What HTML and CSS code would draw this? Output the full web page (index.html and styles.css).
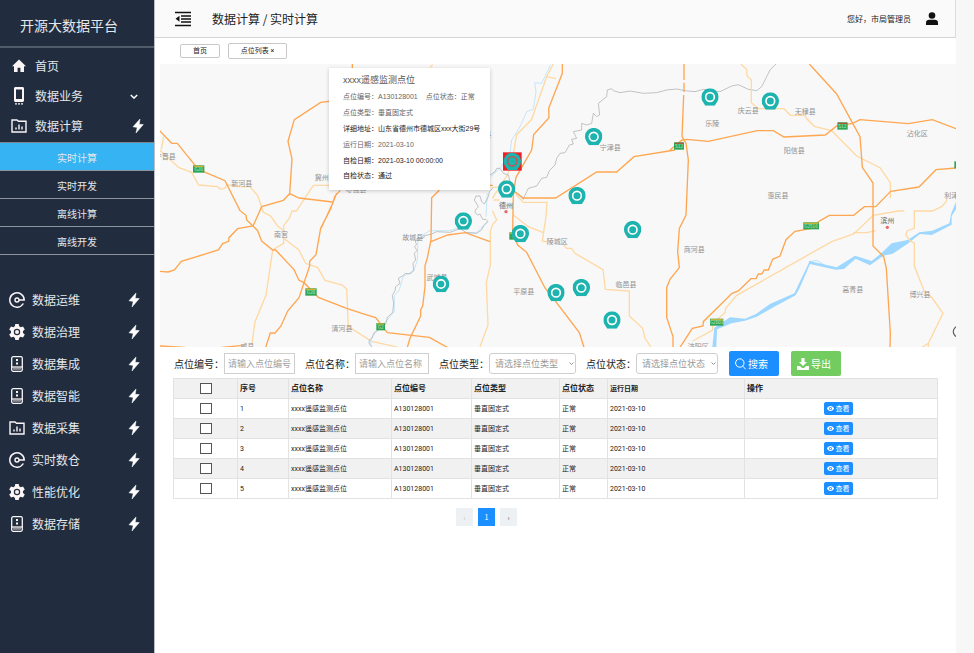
FILE: index.html
```html
<!DOCTYPE html>
<html lang="zh-CN">
<head>
<meta charset="utf-8">
<title>开源大数据平台</title>
<link rel="stylesheet" href="styles.css">
</head>
<body>
<svg class="defs" width="0" height="0" aria-hidden="true">
  <symbol id="i-bolt" viewBox="0 0 12 14"><path d="M8 0 1 7.800 5.200 8.400 4 14 11.300 5.600 7.200 5.200z" fill="currentColor" stroke="currentColor" stroke-width=".5"/></symbol>
  <symbol id="i-home" viewBox="0 0 14 14"><path d="M7 .5 0 7.200h2V13h3.600V8.800h2.800V13H12V7.200h2z" fill="currentColor"/></symbol>
  <symbol id="i-phone" viewBox="0 0 10 18"><path d="M1.500 0h7C9.400 0 10 .6 10 1.500v12c0 .9-.6 1.500-1.500 1.500h-7C.6 15 0 14.400 0 13.500v-12C0 .6.6 0 1.500 0zM2 2.500v9.500h6V2.500z" fill="currentColor" fill-rule="evenodd"/><path d="M1 16.200h2v1.300H1zM4 16.200h2v1.300H4zM7 16.200h2v1.300H7z" fill="currentColor"/></symbol>
  <symbol id="i-chart" viewBox="0 0 16 14"><path d="M1 1h5l1.500 1.200H15V13H1z" fill="none" stroke="currentColor" stroke-width="1.400"/><path d="M5 8.500v2M8 5.500v5M11 7.500v3" stroke="currentColor" stroke-width="1.400"/></symbol>
  <symbol id="i-ring" viewBox="0 0 16 16"><path d="M14.300 11.500A7.200 7.200 0 1 1 15.200 8H10" fill="none" stroke="currentColor" stroke-width="1.500"/><circle cx="8" cy="8" r="2" fill="none" stroke="currentColor" stroke-width="1.400"/></symbol>
  <symbol id="i-gear" viewBox="0 0 16 16"><path d="M6.300 0h3.400l.5 2.300 1.500.9 2.300-.8 1.800 3-1.800 1.700v1.800l1.800 1.700-1.800 3-2.300-.8-1.500.9-.5 2.300H6.300l-.5-2.300-1.500-.9-2.300.8-1.800-3L2 8.900V7.100L.2 5.400l1.800-3 2.300.8 1.500-.9z" fill="currentColor"/><circle cx="8" cy="8" r="2.600" fill="none" stroke="#212d3f" stroke-width="1.200"/></symbol>
  <symbol id="i-server" viewBox="0 0 12 16"><rect x=".7" y=".7" width="10.600" height="14.600" rx="1.500" fill="none" stroke="currentColor" stroke-width="1.300"/><path d="M1 11h10" stroke="currentColor" stroke-width="1.300"/><path d="M5 4h2M5 7.500h2" stroke="currentColor" stroke-width="2"/><path d="M3 13.800v-2M5 13.800v-2M7 13.800v-2M9 13.800v-2" stroke="currentColor"/></symbol>
  <symbol id="i-chev" viewBox="0 0 10 6"><path d="M1 1l4 4 4-4" fill="none" stroke="currentColor" stroke-width="1.800"/></symbol>
  <symbol id="i-eye" viewBox="0 0 14 10"><path d="M7 0C3.500 0 1 2.500 0 5c1 2.500 3.500 5 7 5s6-2.500 7-5C13 2.500 10.500 0 7 0zm0 1.800a3.200 3.200 0 1 1 0 6.400 3.200 3.200 0 0 1 0-6.400z" fill="currentColor" fill-rule="evenodd"/><circle cx="7" cy="5" r="1.700" fill="currentColor"/></symbol>
</svg>
<div class="app">
  <aside class="sidebar">
    <h1 class="brand">开源大数据平台</h1>
    <nav>
      <ul class="menu menu-top">
        <li><a href="#"><svg class="ico" width="14" height="14"><use href="#i-home"/></svg><span>首页</span></a></li>
        <li><a href="#"><svg class="ico" width="14" height="18"><use href="#i-phone"/></svg><span>数据业务</span><svg class="end chev" width="8" height="5"><use href="#i-chev"/></svg></a></li>
        <li><a href="#"><svg class="ico" width="16" height="14"><use href="#i-chart"/></svg><span>数据计算</span><svg class="end" width="12" height="14"><use href="#i-bolt"/></svg></a></li>
      </ul>
      <ul class="submenu">
        <li><a class="active" href="#">实时计算</a></li>
        <li><a href="#">实时开发</a></li>
        <li><a href="#">离线计算</a></li>
        <li><a href="#">离线开发</a></li>
      </ul>
      <ul class="menu menu-main">
        <li><a href="#"><svg class="ico" width="16" height="16"><use href="#i-ring"/></svg><span>数据运维</span><svg class="end" width="12" height="14"><use href="#i-bolt"/></svg></a></li>
        <li><a href="#"><svg class="ico" width="16" height="16"><use href="#i-gear"/></svg><span>数据治理</span><svg class="end" width="12" height="14"><use href="#i-bolt"/></svg></a></li>
        <li><a href="#"><svg class="ico" width="16" height="16"><use href="#i-server"/></svg><span>数据集成</span><svg class="end" width="12" height="14"><use href="#i-bolt"/></svg></a></li>
        <li><a href="#"><svg class="ico" width="16" height="16"><use href="#i-server"/></svg><span>数据智能</span><svg class="end" width="12" height="14"><use href="#i-bolt"/></svg></a></li>
        <li><a href="#"><svg class="ico" width="16" height="14"><use href="#i-chart"/></svg><span>数据采集</span><svg class="end" width="12" height="14"><use href="#i-bolt"/></svg></a></li>
        <li><a href="#"><svg class="ico" width="16" height="16"><use href="#i-ring"/></svg><span>实时数仓</span><svg class="end" width="12" height="14"><use href="#i-bolt"/></svg></a></li>
        <li><a href="#"><svg class="ico" width="16" height="16"><use href="#i-gear"/></svg><span>性能优化</span><svg class="end" width="12" height="14"><use href="#i-bolt"/></svg></a></li>
        <li><a href="#"><svg class="ico" width="16" height="16"><use href="#i-server"/></svg><span>数据存储</span><svg class="end" width="12" height="14"><use href="#i-bolt"/></svg></a></li>
      </ul>
    </nav>
  </aside>

  <main class="main">
    <header class="header">
      <button class="fold" type="button" aria-label="收起菜单"><svg width="16" height="16" viewBox="0 0 16 16"><path d="M0 1.500h16M6 5h10M6 8h10M6 11h10M0 14.500h16" stroke="#111" stroke-width="1.600"/><path d="M4.500 4.800v6L.5 7.800z" fill="#111"/></svg></button>
      <div class="crumb">数据计算 / 实时计算</div>
      <div class="user">您好，市局管理员</div>
      <svg class="avatar" width="12" height="14" viewBox="0 0 12 14"><circle cx="6" cy="3.500" r="3.300" fill="#111"/><path d="M0 13v-2.500C0 8.800 1.500 7.800 3 7.800h6c1.500 0 3 1 3 2.700V13z" fill="#111"/></svg>
    </header>

    <div class="tabs">
      <button class="tab tab-home" type="button">首页</button>
      <button class="tab tab-list" type="button">点位列表 ×</button>
    </div>

    <section class="map">
      <svg class="map-art" viewBox="0 0 2388 849">
        <symbol id="pin" viewBox="-26 -26 52 52"><path d="M-14 26-21 15A26 26 0 1 1 21 15L14 26z" fill="#1db3ae"/><circle r="13" fill="none" stroke="#fff" stroke-width="5"/></symbol>
        <g transform="translate(-15 -12)">
          <g class="minor">
            <path d="M26 230 19 268M14 270 72 323 110 337 131 375 188 380 195 387 207 386 217 375 255 380H285L308 407 325 457 347 468 367 497 386 512M386 535 431 569 452 610 488 623 510 661 562 675 575 687 580 800 650 844 730 862"/>
            <path d="M560 376H475L424 453H411L404 473 386 497V550L353 570 333 706 300 785 291 850"/>
          </g>
          <path class="stream" d="M789 530 787 600 776 634 745 648 733 690 718 706 718 755 695 782 660 820 646 842 650 862"/>
          <path class="border" d="M810 530 800 536 789 534 781 546 785 553 779 560 786 572 778 580 782 600 774 610 776 630 765 642 752 640 742 648 730 655 735 670 722 680 720 692 712 706 716 730 713 757 697 772 692 793 675 806 657 818 650 835 642 842 643 852 650 860"/>
          <g class="major">
            <path d="M14 212 50 250H67L118 313 130 328 210 362 255 452 273 466 275 480 294 498 308 512 320 543 353 570H362L417 629 432 661 447 668 490 712 575 745 630 763 662 773 697 818 823 832 877 862"/>
            <path d="M14 634 40 636 58 630 79 604 190 570 203 551 221 544 222 533 248 506 294 498 320 440 385 421 404 401 432 414 533 426"/>
            <path d="M530 123 497 127 418 179 399 244 411 297 404 401"/>
            <path d="M556 391 540 408 527 446 497 505 483 584 464 604V618L447 668 432 713 398 753 378 798 360 819H346L332 862M545 400 533 430 499 503"/>
            <path d="M14 858 90 862M200 862 258 857M592 12V24"/>
          </g>
          <g class="names">
            <text x="31" y="298">宁晋县</text><text x="260" y="379">新河县</text><text x="500" y="359">冀州</text><text x="603" y="395">枣强县</text><text x="378" y="531">南宫</text><text x="773" y="541">故城县</text><text x="561" y="812">清河县</text><text x="277" y="868">威县</text>
          </g>
          <g class="shields">
            <rect x="114" y="316" width="34" height="22"/><path d="M116 319h30"/><text x="131" y="333">G20</text>
            <rect x="451" y="685" width="34" height="22"/><path d="M453 688h30"/><text x="468" y="702">G20</text>
            <rect x="664" y="789" width="26" height="22"/><path d="M666 792h22"/><text x="677" y="806">G2</text>
          </g>
        </g>
        <g transform="translate(720 -12)">
          <g class="minor">
            <path d="M460 12 440 50 410 135 395 178 350 224 335 310 322 345 277 415M440 50 468 56M277 452 290 480 277 495 271 515V615L259 668 264 795 240 860"/>
            <path d="M340 395 370 427H441L438 470 427 543 442 546M340 465 385 500 430 518M492 555 500 565H515L525 580 609 629 616 688 688 693V768L728 805 735 835 752 860M280 420H298M98 14 90 22M275 382H300"/>
          </g>
          <path class="stream" d="M452 14 425 70 404 68 408 95 400 148 380 155 360 200 335 240 330 280 300 325 272 350M262 400 258 470M60 530 90 512H150L180 502M200 518H230L262 485"/>
          <path class="border" d="M55 542 70 528 95 522 110 515 150 517 180 506 200 518 230 520 245 510 250 498 264 485 258 478 248 478 240 462 233 465 225 458 226 450 235 440 223 420 228 408 240 408 245 425 253 432 265 410 268 395 278 385M270 345 285 335 290 325 300 325 310 340 325 345 330 365 328 385 345 395 370 418 380 395 385 385 410 378 425 355 440 352 448 332 465 315 470 295 480 280 495 278 508 255 520 252 515 238 530 235 520 215 545 210 545 190 560 195 575 190 580 160 590 170 599 165 595 130 620 110 622 90 635 86 640 92 660 98 690 93 730 100 770 98 800 90 830 87 855 92 885 95 910 88 960 95 995 78 1015 74 1045 88 1070 92 1085 80 1110 30 1128 12"/>
          <g class="major">
            <path d="M118 391 95 413 93 540 81 598 75 617V680L68 738 62 750V768L30 835 22 862M93 545 143 525 196 518 270 545"/>
            <path d="M487 12V40L446 145 447 173 401 224 395 270 348 352 340 400 338 515 353 555 380 577 435 684 465 722 538 818 552 862"/>
            <path d="M345 395 370 414H467L590 336H650L702 290 825 270M268 376H278"/>
          </g>
          <g class="names">
            <text x="264" y="231">县</text><text x="631" y="269">宁津县</text><text x="472" y="551">陵城区</text><text x="111" y="660">武城县</text><text x="371" y="701">平原县</text><text x="678" y="680">临邑县</text><text class="city" x="318" y="443">德州</text>
          </g>
          <circle cx="318" cy="455" r="5" fill="#e66"/>
          <g class="shields"><rect x="328" y="517" width="34" height="22"/><path d="M330 520h30"/><text x="345" y="534">G3</text></g>
          <rect x="309" y="277" width="56" height="55" fill="#ef1f25"/>
          <g class="pins">
            <circle cx="337" cy="304" r="26" fill="#1db3ae"/>
            <path d="M323 330h28l7-12h-42z" fill="#1db3ae"/>
            <circle cx="337" cy="304" r="14" fill="none" stroke="#d8484a" stroke-width="4"/>
            <use href="#pin" x="555" y="204" width="52" height="52"/>
            <use href="#pin" x="294" y="361" width="52" height="52"/>
            <use href="#pin" x="505" y="381" width="52" height="52"/>
            <use href="#pin" x="164" y="457" width="52" height="52"/>
            <use href="#pin" x="335" y="495" width="52" height="52"/>
            <use href="#pin" x="672" y="483" width="52" height="52"/>
            <use href="#pin" x="98" y="647" width="50" height="50"/>
            <use href="#pin" x="442" y="672" width="52" height="52"/>
            <use href="#pin" x="518" y="657" width="52" height="52"/>
            <use href="#pin" x="610" y="754" width="52" height="52"/>
          </g>
        </g>
        <g transform="translate(1530 -12)">
          <path fill="#9ed7ff" d="M858 425 843 462 838 490 787 512 748 517 713 540 665 550 637 577 605 603 555 587 500 622 418 603 415 612 388 668 373 700 300 732 258 762 225 776 180 772 133 803 127 862H139L141 808 185 790 225 782 260 770 310 742 377 706 390 682 420 612 497 629 522 627 557 596 600 616 640 587 668 581 715 550 750 522 785 525 845 494V468L858 448z"/>
          <path d="M418 605 440 601 462 614" fill="none" stroke="#9ed7ff" stroke-width="2"/>
          <g class="minor">
            <path d="M212 12 230 28 231 48 244 60V128L265 146H342L361 166H405L411 177 433 199 485 212 560 288 630 323 661 368V415"/>
            <path d="M703 453H685L610 466 551 522 485 545 200 706 167 745 165 758 128 790V810L68 843M550 518H590L617 512"/>
            <path d="M835 405 828 425 815 440 787 453H733V505L712 512 707 525 720 542 733 550V618L765 700 785 712 819 760 775 850 757 862M775 850V862"/>
          </g>
          <g class="major">
            <path d="M42 12V60M42 68V96M41 105 36 230 48 250 55 300 48 465 28 505 23 575 28 623 0 658-10 683V772L9 830V862"/>
            <path d="M0 270 36 240 50 238 115 244 262 212H310L342 231 466 225 500 198 548 190 570 179 715 191 787 179 858 206"/>
            <path d="M418 12 500 102 570 230 577 322 609 369V558L641 590 649 625 661 820 660 862"/>
            <path d="M858 324 798 329 747 381 662 394 617 440H583L551 466H478L447 484 425 505 375 514 348 539 330 588 308 598 295 630H283L275 642H265L258 656H243L205 693 186 700 100 785 99 798 67 805 30 862"/>
          </g>
          <g class="names">
            <text x="235" y="159">庆云县</text><text x="406" y="162">无棣县</text><text x="127" y="199">乐陵</text><text x="742" y="228">沾化区</text><text x="373" y="279">阳信县</text><text x="324" y="414">惠民县</text><text x="73" y="575">商河县</text><text class="city" x="652" y="490">滨州</text><text x="854" y="414">利津县</text><text x="548" y="697">高青县</text><text x="750" y="712">博兴县</text><text x="85" y="866">济阳区</text>
          </g>
          <circle cx="652" cy="502" r="5" fill="#e66"/>
          <g class="shields">
            <rect x="12" y="247" width="30" height="22"/><path class="prov" d="M14 250h26"/><text x="27" y="264">S12</text>
            <rect x="502" y="187" width="31" height="22"/><path class="prov" d="M504 190h27"/><text x="517" y="204">S12</text>
            <rect x="400" y="487" width="47" height="21"/><path d="M402 490h43"/><text x="423" y="504">G2516</text>
            <rect x="120" y="776" width="40" height="21"/><path d="M122 779h36"/><text x="140" y="793">G2001</text>
            <rect x="853" y="304" width="30" height="21"/>
          </g>
          <circle cx="866" cy="815" r="16" fill="#fff" stroke="#666" stroke-width="4"/>
          <use href="#pin" x="94" y="85" width="52" height="52"/>
          <use href="#pin" x="275" y="97" width="52" height="52"/>
        </g>
      </svg>
      <div class="popup">
        <h2>xxxx遥感监测点位</h2>
        <p><span>点位编号：A130128001</span><span>点位状态：正常</span></p>
        <p>点位类型：垂直固定式</p>
        <p class="strong">详细地址：山东省德州市德城区xxx大街29号</p>
        <p>运行日期：2021-03-10</p>
        <p class="strong">自检日期：2021-03-10 00:00:00</p>
        <p class="strong">自检状态：通过</p>
      </div>
    </section>

    <form class="filters">
      <div class="field"><label for="f-no">点位编号：</label><input class="w-no" id="f-no" type="text" placeholder="请输入点位编号"></div>
      <div class="field"><label for="f-name">点位名称：</label><input class="w-name" id="f-name" type="text" placeholder="请输入点位名称"></div>
      <div class="field"><label for="f-type">点位类型：</label><div class="pick w-type"><select id="f-type"><option>请选择点位类型</option></select><svg width="5" height="3"><use href="#i-chev"/></svg></div></div>
      <div class="field"><label for="f-state">点位状态：</label><div class="pick w-state"><select id="f-state"><option>请选择点位状态</option></select><svg width="5" height="3"><use href="#i-chev"/></svg></div></div>
      <div class="actions">
        <button class="btn search" type="button"><svg width="11" height="12" viewBox="0 0 11 12"><circle cx="4.800" cy="5" r="4.200" fill="none" stroke="#fff"/><path d="M7.800 8.200 10.700 11.300" stroke="#fff"/></svg>搜索</button>
        <button class="btn export" type="button"><svg width="12" height="12" viewBox="0 0 12 12"><path d="M4.400 0h3.200v4H10L6 8 2 4h2.400zM0 8h3l2 2h2l2-2h3v4H0z" fill="#fff"/></svg>导出</button>
      </div>
    </form>

    <table class="grid">
      <colgroup><col class="c1"><col class="c2"><col class="c3"><col class="c4"><col class="c5"><col class="c6"><col class="c7"><col class="c8"></colgroup>
      <thead>
        <tr><th class="mid"><input type="checkbox" aria-label="全选"></th><th>序号</th><th>点位名称</th><th>点位编号</th><th>点位类型</th><th>点位状态</th><th class="small">运行日期</th><th>操作</th></tr>
      </thead>
      <tbody>
        <tr><td class="mid"><input type="checkbox" aria-label="选择 1"></td><td>1</td><td>xxxx遥感监测点位</td><td>A130128001</td><td>垂直固定式</td><td>正常</td><td>2021-03-10</td><td class="op"><button class="view" type="button"><svg width="7" height="5"><use href="#i-eye"/></svg>查看</button></td></tr>
        <tr><td class="mid"><input type="checkbox" aria-label="选择 2"></td><td>2</td><td>xxxx遥感监测点位</td><td>A130128001</td><td>垂直固定式</td><td>正常</td><td>2021-03-10</td><td class="op"><button class="view" type="button"><svg width="7" height="5"><use href="#i-eye"/></svg>查看</button></td></tr>
        <tr><td class="mid"><input type="checkbox" aria-label="选择 3"></td><td>3</td><td>xxxx遥感监测点位</td><td>A130128001</td><td>垂直固定式</td><td>正常</td><td>2021-03-10</td><td class="op"><button class="view" type="button"><svg width="7" height="5"><use href="#i-eye"/></svg>查看</button></td></tr>
        <tr><td class="mid"><input type="checkbox" aria-label="选择 4"></td><td>4</td><td>xxxx遥感监测点位</td><td>A130128001</td><td>垂直固定式</td><td>正常</td><td>2021-03-10</td><td class="op"><button class="view" type="button"><svg width="7" height="5"><use href="#i-eye"/></svg>查看</button></td></tr>
        <tr><td class="mid"><input type="checkbox" aria-label="选择 5"></td><td>5</td><td>xxxx遥感监测点位</td><td>A130128001</td><td>垂直固定式</td><td>正常</td><td>2021-03-10</td><td class="op"><button class="view" type="button"><svg width="7" height="5"><use href="#i-eye"/></svg>查看</button></td></tr>
      </tbody>
    </table>

    <nav class="pager" aria-label="分页">
      <button class="off" type="button">‹</button>
      <button class="current" type="button">1</button>
      <button type="button">›</button>
    </nav>
  </main>
</div>
</body>
</html>
```
FILE: styles.css
```css
* { box-sizing: border-box; }

body {
  margin: 0;
  background: #f7f7f7;
  color: #222;
  font-family: "Noto Sans CJK SC", sans-serif;
  font-size: 7px;
}

button, input, select { font: inherit; color: inherit; margin: 0; }
button { cursor: pointer; padding: 0; border: 0; }
ul { list-style: none; margin: 0; padding: 0; }
a { color: inherit; text-decoration: none; }
svg { display: block; flex: none; }
.defs { position: absolute; }

.app { display: flex; min-height: 100vh; padding-right: 18px; }

/* Sidebar */
.sidebar {
  flex: none;
  width: 155px;
  background: #212d3f;
  border-right: 1px solid #b9bdc4;
  color: #e4e7eb;
}
.brand {
  margin: 0;
  height: 48px;
  padding: 4px 0 0 20px;
  border-bottom: 2px solid #515b69;
  font-size: 14px;
  font-weight: 400;
  line-height: 42px;
}
.menu a { display: flex; align-items: center; font-size: 12px; line-height: 18px; }
.menu .end { margin-left: auto; color: #fff; }
.menu .chev { margin-right: 6px; }
.menu .ico { color: #fbf5f5; }
.menu-top { padding: 3px 0 1px; }
.menu-top a { height: 30px; padding: 0 10px 0 11px; }
.menu-top .ico { width: 16px; margin-right: 8px; }
.menu-main { margin-top: 29px; }
.menu-main a { height: 32px; padding: 0 14px 0 9px; }
.menu-main .ico { margin-right: 7px; }
.submenu { border-top: 1px solid #7d848e; }
.submenu a {
  display: block;
  height: 28px;
  border-bottom: 1px solid #8d939c;
  font-size: 10px;
  line-height: 29px;
  text-align: center;
}
.submenu .active { background: #35b3f2; }

/* Main column */
.main { flex: 1; min-width: 0; background: #fff; }
.header {
  display: flex;
  align-items: center;
  height: 38px;
  padding: 0 17px 0 20px;
  background: #fafafa;
  border-right: 1px solid #ddd;
  border-bottom: 1px solid #d4d4d4;
}
.fold { background: none; }
.crumb { margin-left: 21px; font-size: 12px; line-height: 18px; }
.user { margin-left: auto; margin-right: 15px; font-size: 8px; line-height: 12px; }

.tabs {
  display: flex;
  align-items: center;
  gap: 8px;
  height: 26px;
  padding-left: 25px;
  font-family: Roboto, "Noto Sans CJK SC", sans-serif;
}
.tab { background: #fff; border: 1px solid #c8c8c8; border-radius: 2px; line-height: 10px; }
.tab-home { width: 40px; height: 14px; }
.tab-list { width: 59px; height: 16px; }

/* Map */
.map { position: relative; margin-left: 5px; background: #f8f8f8; overflow: hidden; }
.map-art { width: 100%; height: auto; }
.major path { fill: none; stroke: #ffa650; stroke-width: 4; }
.minor path { fill: none; stroke: #ffd9a3; stroke-width: 4; }
.border { fill: none; stroke: #a3a7ab; stroke-width: 2; }
.stream { fill: none; stroke: #c5e6fb; stroke-width: 3; }
.names text { fill: #919191; font-size: 21px; text-anchor: middle; }
.names .city { fill: #666; }
.shields rect { fill: #2fa454; }
.shields path { stroke: #c9b136; stroke-width: 4; }
.shields .prov { stroke: #a75a3c; }
.shields text { fill: #c5ecc9; font-size: 14px; text-anchor: middle; }

.popup {
  position: absolute;
  left: 169px;
  top: 4px;
  width: 161px;
  padding: 4px 0 7px 14px;
  background: #fff;
  box-shadow: 0 1px 4px rgba(0, 0, 0, 0.2);
  color: #666;
  font-family: "Liberation Sans", "Noto Sans CJK SC", sans-serif;
  white-space: nowrap;
}
.popup h2 { margin: 0; font-size: 9px; font-weight: 400; line-height: 17px; color: #555; }
.popup p { margin: 0; line-height: 16px; }
.popup p:last-child { line-height: 14px; }
.popup span + span { margin-left: 8px; }
.popup .strong { color: #222; }

/* Filters */
.filters { display: flex; align-items: center; gap: 10px; padding: 4px 19px 2px; font-size: 10px; }
.field { display: flex; align-items: center; }
.field label { line-height: 16px; white-space: nowrap; }
.field input, .field select {
  height: 21px;
  border: 1px solid #cfcfcf;
  background: #fff;
  color: #999;
  font-size: 9px;
  padding: 0 3px;
}
.field input::placeholder { color: #a0a0a0; opacity: 1; }
.field select { width: 100%; padding: 0 5px; border-radius: 3px; appearance: none; }
.pick { position: relative; }
.pick svg { position: absolute; right: 2px; top: 9px; color: #888; }
.w-no { width: 71px; }
.w-name { width: 74px; }
.w-type { width: 87px; }
.w-state { width: 82px; }
.actions { display: flex; gap: 12px; margin-left: 1px; }
.btn {
  display: flex;
  align-items: center;
  gap: 2px;
  width: 50px;
  height: 25px;
  padding-left: 6px;
  border-radius: 2px;
  color: #fff;
}
.search { background: #1b8fff; }
.export { background: #72cc60; }

/* Table */
.grid {
  width: calc(100% - 36px);
  margin-left: 18px;
  table-layout: fixed;
  border-collapse: collapse;
  font-family: Roboto, "Noto Sans CJK SC", sans-serif;
}
.c1 { width: 64px; }
.c2 { width: 51px; }
.c3 { width: 103px; }
.c4 { width: 80px; }
.c5 { width: 88px; }
.c6 { width: 48px; }
.c7 { width: 137px; }
.grid th, .grid td {
  height: 20px;
  padding: 0 2px;
  border: 1px solid #e2e2e2;
  line-height: 12px;
  text-align: left;
}
.grid th { background: #f1f1f1; font-size: 8px; font-weight: 700; }
.grid .small { font-size: 7px; }
.grid tbody tr:nth-child(even) { background: #f1f1f1; }
.grid .mid { text-align: center; }
.grid input {
  appearance: none;
  display: block;
  width: 12px;
  height: 11px;
  margin: 0 auto;
  border: 1px solid #555;
  background: #fff;
}
.view {
  display: flex;
  align-items: center;
  justify-content: center;
  gap: 2px;
  width: 29px;
  height: 13px;
  margin: 0 auto;
  border-radius: 2px;
  background: #1b8fff;
  color: #fff;
  line-height: 12px;
}
.grid .op { padding-right: 8px; }

.pager { display: flex; gap: 5px; margin: 9px 0 0 301px; }
.pager button { width: 17px; height: 18px; background: #edf1f4; color: #555; line-height: 18px; }
.pager .off { color: #bbb; }
.pager .current { background: #1b8fff; color: #fff; }
```
